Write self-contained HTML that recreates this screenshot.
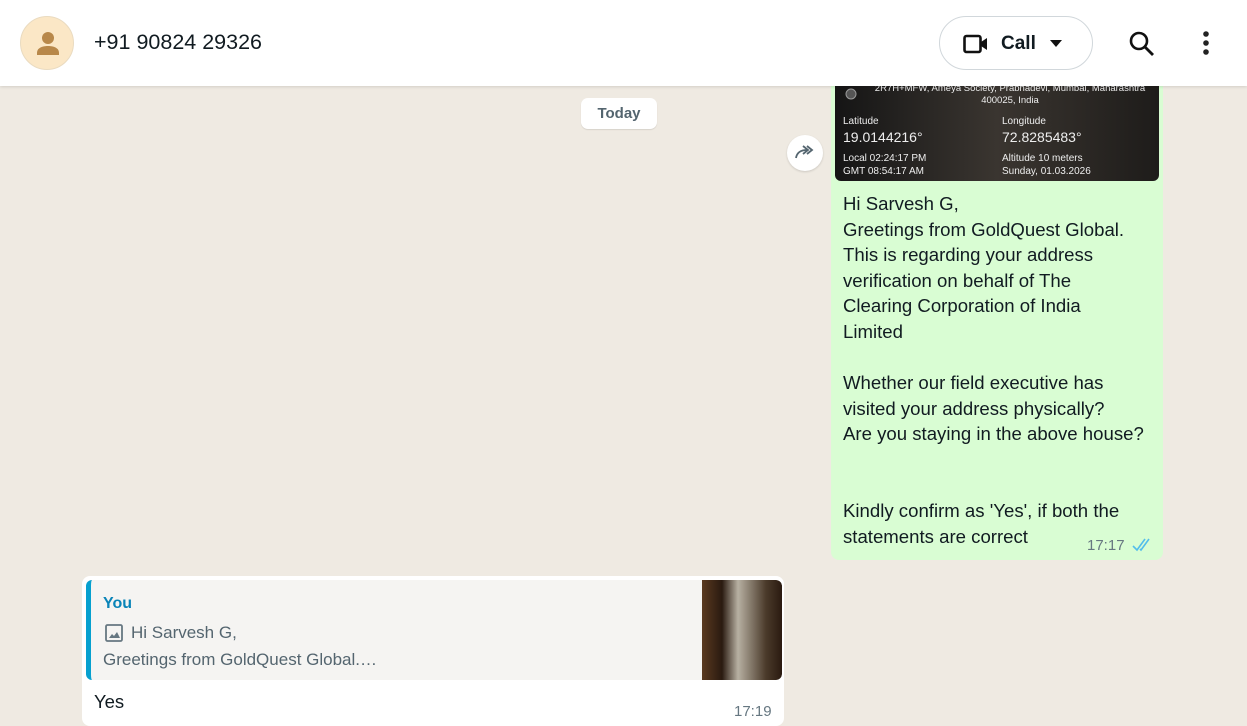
<!DOCTYPE html>
<html><head><meta charset="utf-8"><style>
*{box-sizing:border-box;margin:0;padding:0}
body{width:1247px;height:723px;overflow:hidden;background:#efeae2;font-family:"Liberation Sans",sans-serif;position:relative;color:#111b21}
.hdr{position:absolute;left:0;top:0;width:1247px;height:86px;background:#fff;box-shadow:0 1px 3px rgba(0,0,0,.12);z-index:5}
.av{position:absolute;left:20px;top:16px;width:54px;height:54px;border-radius:50%;background:#fbe7c6;border:1px solid #eadbc0}
.name{position:absolute;left:94px;top:30px;font-size:21.5px;color:#111b21}
.call{position:absolute;left:939px;top:16px;width:154px;height:54px;border:1px solid #d1d7db;border-radius:27px}
.call span{position:absolute;left:61px;top:16px;font-size:19px;font-weight:bold}
.bub{position:absolute;border-radius:8px}
.g{left:831px;top:76px;width:332px;height:484px;background:#d9fdd3}
.img{position:absolute;left:4px;top:4px;width:324px;height:101px;background:linear-gradient(90deg,#151515,#3a3530 50%,#1e1c1a);border-radius:0 0 6px 6px;color:#eee;font-size:10px}
.txt{position:absolute;left:12px;top:115px;font-size:18.6px;line-height:25.6px;color:#111b21}
.w{left:82px;top:576px;width:702px;height:150px;background:#fff}
.q{position:absolute;left:4px;top:4px;width:696px;height:100px;background:#f5f4f2;border-left:5px solid #06a0cf;border-radius:6px;overflow:hidden}
</style></head><body>
<div class="hdr">
<div class="av"><svg width="54" height="54" viewBox="0 0 54 54"><circle cx="27" cy="21" r="6" fill="#b8884a"/><path d="M16 36c0-5 5-7 11-7s11 2 11 7v2H16z" fill="#b8884a"/></svg></div>
<div class="name">+91 90824 29326</div>
<div class="call"><svg style="position:absolute;left:23px;top:17px" width="26" height="20" viewBox="0 0 26 20"><rect x="1.5" y="2" width="16" height="16" rx="2" fill="none" stroke="#111" stroke-width="2.6"/><path d="M18 8l6-4v12l-6-4z" fill="#111"/></svg><span>Call</span><svg style="position:absolute;left:110px;top:23px" width="12" height="8"><path d="M0 0h12L6 7z" fill="#111"/></svg></div>
<svg style="position:absolute;left:1128px;top:30px" width="28" height="28" viewBox="0 0 28 28"><circle cx="11" cy="11" r="8" fill="none" stroke="#111" stroke-width="2.6"/><path d="M17 17l8 8" stroke="#111" stroke-width="2.8"/></svg>
<svg style="position:absolute;left:1200px;top:30px" width="12" height="26"><circle cx="6" cy="4" r="2.8" fill="#222"/><circle cx="6" cy="13" r="2.8" fill="#222"/><circle cx="6" cy="22" r="2.8" fill="#222"/></svg>
</div>
<div style="position:absolute;left:581px;top:98px;width:76px;height:31px;background:#fff;border-radius:7px;font-size:15px;font-weight:bold;color:#54656f;text-align:center;line-height:31px;box-shadow:0 1px 1px rgba(0,0,0,.1)">Today</div>
<div style="position:absolute;left:787px;top:135px;width:36px;height:36px;border-radius:50%;background:#fff;box-shadow:0 1px 2px rgba(0,0,0,.15)"><svg width="36" height="36" viewBox="0 0 36 36"><path d="M9 23c1-6 5-8 11-8M16 11l5 4-5 4M20 11l5 4-5 4" fill="none" stroke="#54656f" stroke-width="1.8"/></svg></div>
<div class="bub g">
<div class="img">
<svg style="position:absolute;left:10px;top:8px" width="12" height="12"><circle cx="6" cy="6" r="5" fill="#555" stroke="#999"/></svg>
<div style="position:absolute;left:20px;top:3px;width:310px;text-align:center;line-height:12px;font-size:9.5px;white-space:nowrap">2R7H+MFW, Ameya Society, Prabhadevi, Mumbai, Maharashtra<br>400025, India</div>
<div style="position:absolute;left:8px;top:36px">Latitude</div><div style="position:absolute;left:8px;top:49px;font-size:14px">19.0144216°</div>
<div style="position:absolute;left:167px;top:36px">Longitude</div><div style="position:absolute;left:167px;top:49px;font-size:14px">72.8285483°</div>
<div style="position:absolute;left:8px;top:72px;line-height:13px">Local 02:24:17 PM<br>GMT 08:54:17 AM</div>
<div style="position:absolute;left:167px;top:72px;line-height:13px">Altitude 10 meters<br>Sunday, 01.03.2026</div>
</div>
<div class="txt">Hi Sarvesh G,<br>Greetings from GoldQuest Global.<br>This is regarding your address<br>verification on behalf of The<br>Clearing Corporation of India<br>Limited<br><br>Whether our field executive has<br>visited your address physically?<br>Are you staying in the above house?<br><br><br>Kindly confirm as 'Yes', if both the<br>statements are correct</div>
<div style="position:absolute;left:256px;top:461px;font-size:15px;color:#667781">17:17</div>
<svg style="position:absolute;left:301px;top:462px" width="22" height="14"><path d="M1 8l4 4 8-11M8 11l1 1 8-11" fill="none" stroke="#53bdeb" stroke-width="1.6"/></svg>
</div>
<div class="bub w">
<div class="q">
<div style="position:absolute;left:12px;top:15px;font-size:16px;font-weight:bold;color:#0a84b8">You</div>
<svg style="position:absolute;left:14px;top:44px" width="18" height="18"><rect x="1" y="1" width="16" height="16" rx="1.5" fill="none" stroke="#667781" stroke-width="1.8"/><path d="M4 14l3-4 2 2 3-4 3 6z" fill="#667781"/></svg>
<div style="position:absolute;left:40px;top:43px;font-size:17px;color:#54656f">Hi Sarvesh G,</div>
<div style="position:absolute;left:12px;top:70px;font-size:17px;color:#54656f">Greetings from GoldQuest Global.…</div>
<div style="position:absolute;left:611px;top:0;width:80px;height:100px;background:linear-gradient(90deg,#5a3a20,#2a1a10 25%,#b7b0a2 45%,#4a3a2a 80%,#2a1a10);border-radius:0 6px 6px 0"></div>
</div>
<div style="position:absolute;left:12px;top:115px;font-size:18.5px">Yes</div>
<div style="position:absolute;left:652px;top:127px;font-size:15px;color:#667781">17:19</div>
</div>
</body></html>
